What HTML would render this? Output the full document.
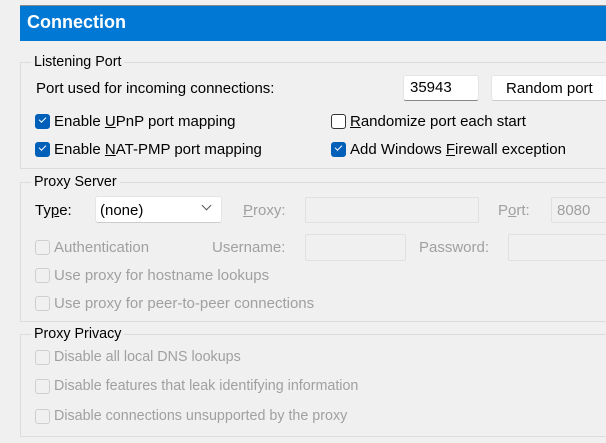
<!DOCTYPE html><html><head><style>
body{margin:0;width:606px;height:443px;background:#f0f0f0;font-family:"Liberation Sans",sans-serif;font-size:15px;color:#000;position:relative;overflow:hidden}
div,span{position:absolute;white-space:nowrap}
.t{line-height:17px}
.s{font-size:14.3px}
.d{color:#a0a0a0}
.cb{width:13px;height:13px;border:1px solid #333;border-radius:3px;background:#fff}
.cb.dis{border-color:#cfcfcf;background:#f0f0f0}
.cb.on{background:#005fb8;border-color:#005fb8}
.cb.on:after{content:"";position:absolute;left:3px;top:2px;width:6px;height:3px;border-left:1.5px solid #fff;border-bottom:1.5px solid #fff;transform:rotate(-45deg)}
.in{background:#fff;border:1px solid #e5e5e5;border-bottom:1px solid #888;border-radius:3px}
.di{border:1px solid #e0e0e0;border-radius:2px;background:#f0f0f0}
.g{border:1px solid #dcdcdc;border-right:none;left:20px;width:600px}
.gl{background:#f0f0f0;padding:0 3px}
</style></head><body>
<div style="left:20px;top:5px;width:600px;height:35px;background:#0078d4;border-top:1px solid #888"></div>
<div style="left:27px;top:12px;color:#fff;font-weight:bold;font-size:18px">Connection</div>

<div class="g" style="top:62px;height:105px"></div>
<div class="gl t s" style="left:31px;top:54px">Listening Port</div>
<div class="t" style="left:36px;top:80px">Port used for incoming connections:</div>
<div class="in" style="left:403px;top:75px;width:74px;height:24px"></div>
<div class="t" style="left:410px;top:79px">35943</div>
<div class="in" style="left:491px;top:75px;width:120px;height:24px;border-bottom-color:#ccc"></div>
<div class="t" style="left:506px;top:80px">Random port</div>
<div class="cb on" style="left:35px;top:114px"></div><div class="t" style="left:54px;top:113px">Enable <u>U</u>PnP port mapping</div>
<div class="cb on" style="left:35px;top:142px"></div><div class="t" style="left:54px;top:141px">Enable <u>N</u>AT-PMP port mapping</div>
<div class="cb" style="left:331px;top:114px"></div><div class="t" style="left:350px;top:113px"><u>R</u>andomize port each start</div>
<div class="cb on" style="left:331px;top:142px"></div><div class="t" style="left:350px;top:141px">Add Windows <u>F</u>irewall exception</div>

<div class="g" style="top:182px;height:138px"></div>
<div class="gl t s" style="left:31px;top:174px">Proxy Server</div>
<div class="t" style="left:35px;top:202px">Ty<u>p</u>e:</div>
<div class="in" style="left:95px;top:196px;width:125px;height:25px;border-bottom-color:#ccc"></div>
<div class="t" style="left:100px;top:202px">(none)</div>
<div style="left:203px;top:202px;width:6px;height:6px;border-right:1px solid #555;border-bottom:1px solid #555;transform:rotate(45deg)"></div>
<div class="t d" style="left:243px;top:202px"><u>P</u>roxy:</div>
<div class="di" style="left:305px;top:197px;width:172px;height:24px"></div>
<div class="t d" style="left:498px;top:202px">P<u>o</u>rt:</div>
<div class="di" style="left:551px;top:197px;width:60px;height:24px"></div>
<div class="t d" style="left:557px;top:202px">8080</div>
<div class="cb dis" style="left:35px;top:240px"></div><div class="t d" style="left:54px;top:239px">Authentication</div>
<div class="t d" style="left:212px;top:239px">Username:</div>
<div class="di" style="left:305px;top:234px;width:99px;height:25px"></div>
<div class="t d" style="left:419px;top:239px">Password:</div>
<div class="di" style="left:508px;top:234px;width:100px;height:25px"></div>
<div class="cb dis" style="left:35px;top:268px"></div><div class="t d" style="left:54px;top:267px">Use proxy for hostname lookups</div>
<div class="cb dis" style="left:35px;top:296px"></div><div class="t d" style="left:54px;top:295px">Use proxy for peer-to-peer connections</div>

<div class="g" style="top:334px;height:101px"></div>
<div class="gl t s" style="left:31px;top:326px">Proxy Privacy</div>
<div class="cb dis" style="left:35px;top:350px"></div><div class="t d s" style="left:54px;top:349px">Disable all local DNS lookups</div>
<div class="cb dis" style="left:35px;top:379px"></div><div class="t d s" style="left:54px;top:378px">Disable features that leak identifying information</div>
<div class="cb dis" style="left:35px;top:409px"></div><div class="t d s" style="left:54px;top:408px">Disable connections unsupported by the proxy</div>
</body></html>
